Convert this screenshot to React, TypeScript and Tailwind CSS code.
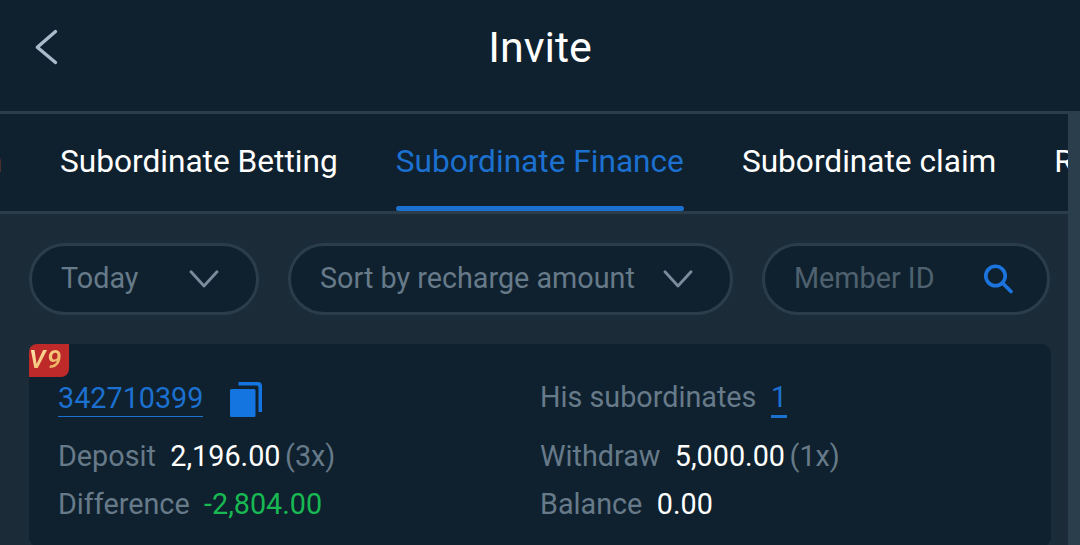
import type { ReactNode } from 'react';

const tabs = [
  { label: 'Commission', active: false, box: 'w-[2px] items-end' },
  { label: 'Subordinate Betting', active: false, box: '' },
  { label: 'Subordinate Finance', active: true, box: '' },
  { label: 'Subordinate claim', active: false, box: '' },
  { label: 'Rebate', active: false, box: '' },
];

function ChevronDown() {
  return (
    <svg className="h-[18px] w-[30px] shrink-0" viewBox="0 0 30 18" fill="none" stroke="#7b8d9c" strokeWidth="2.8" strokeLinecap="round" strokeLinejoin="round">
      <path d="M2 1.8 15 16 28 1.8" />
    </svg>
  );
}

function Pill({ className, children }: { className: string; children: ReactNode }) {
  return (
    <div className={`flex h-[72px] shrink-0 items-center justify-between rounded-full border-[3px] border-[#2b3d4b] bg-[#0f212e] pl-[29px] ${className}`}>
      {children}
    </div>
  );
}

function Stat({ label, value, note, tone = 'text-white' }: { label: string; value: string; note?: string; tone?: string }) {
  return (
    <div className="flex h-12 items-center whitespace-pre">
      <span>{label}</span>
      <span className={`ml-[14.4px] ${tone}`}>{value}</span>
      {note && <span className="ml-[4.6px]">{note}</span>}
    </div>
  );
}

export default function App() {
  return (
    <div className="flex h-[545px] w-[1080px] flex-col overflow-hidden bg-[#1b2c38] font-['Roboto',sans-serif] text-[28.75px] leading-none text-[#677a89]">
      <header className="grid h-[111px] shrink-0 grid-cols-[1fr_auto_1fr] items-start bg-[#0f212e]">
        <button aria-label="Back" className="ml-[34px] mt-[29px] w-6">
          <svg className="h-9 w-6" viewBox="0 0 24 36" fill="none" stroke="#a9bacb" strokeWidth="3.4" strokeLinecap="round" strokeLinejoin="round">
            <path d="M21.5 2.5 3.3 18.2 21.5 33.5" />
          </svg>
        </button>
        <h1 className="mt-[25px] text-[43px] leading-[44px] text-white">Invite</h1>
      </header>
      <div className="flex min-h-0 flex-1">
        <main className="flex w-[1068px] shrink-0 flex-col overflow-hidden">
          <nav className="flex h-[103px] shrink-0 gap-[58px] overflow-hidden border-y-[3px] border-[#2b3d4b] bg-[#0f212e] text-[31.63px]">
            {tabs.map((tab) => (
              <div key={tab.label} className={`flex shrink-0 flex-col justify-between whitespace-nowrap ${tab.box} ${tab.active ? 'text-[#1c70d0]' : 'text-white'}`}>
                <span className="mt-8 leading-8">{tab.label}</span>
                {tab.active && <span className="h-[5px] rounded-full bg-[#1c70d0]" />}
              </div>
            ))}
          </nav>
          <div className="flex shrink-0 gap-[29px] pl-[29px] pt-[29px]">
            <Pill className="w-[230px] pr-[37px]">
              <span className="pb-[2px]">Today</span>
              <ChevronDown />
            </Pill>
            <Pill className="w-[445px] pr-[37px]">
              <span className="whitespace-nowrap pb-[2px]">Sort by recharge amount</span>
              <ChevronDown />
            </Pill>
            <Pill className="w-[288px] pr-[33px]">
              <span className="pb-[2px] text-[#4f616f]">Member ID</span>
              <svg className="h-[30px] w-[30px]" viewBox="0 0 30 30" fill="none" stroke="#1c74df" strokeWidth="3.6" strokeLinecap="round">
                <circle cx="11.5" cy="12" r="9.7" />
                <path d="m19 19.5 8 8" />
              </svg>
            </Pill>
          </div>
          <section className="relative ml-[29px] mt-[29px] grid h-[203px] w-[1022px] shrink-0 grid-cols-[482px_1fr] content-start rounded-[10px] bg-[#0f212e] pl-[29px] pt-[38px]">
            <div className="absolute left-0 top-0 flex h-[33px] w-[40px] rounded-br-[8px] rounded-tl-[8px] bg-[#bd2a29] font-semibold italic">
              <span className="bg-linear-to-br from-[#fff0bd] via-[#f5c477] to-[#d99445] bg-clip-text pr-1 text-[26px] leading-[31px] tracking-[1.5px] text-transparent">V9</span>
            </div>
            <div className="flex h-[50px] items-start">
              <a className="h-[35px] border-b border-[#1c70d0] pt-[2px] leading-[28px] text-[#1c70d0]">342710399</a>
              <svg className="ml-[27px] h-[35px] w-[32px]" viewBox="0 0 32 35" fill="#1475e1">
                <rect y="7" width="25.5" height="28" rx="1.5" />
                <path d="M8.5 0H28a4 4 0 0 1 4 4v26h-3.5V5.5a2 2 0 0 0-2-2h-18z" />
              </svg>
            </div>
            <div className="flex h-[50px] items-start">
              <span className="pt-px leading-[28px]">His subordinates</span>
              <a className="ml-[14.5px] h-9 border-b-[3px] border-[#1c70d0] pt-px leading-[28px] text-[#1c70d0]">1</a>
            </div>
            <Stat label="Deposit" value="2,196.00" note="(3x)" />
            <Stat label="Withdraw" value="5,000.00" note="(1x)" />
            <Stat label="Difference" value="-2,804.00" tone="text-[#18b852]" />
            <Stat label="Balance" value="0.00" />
          </section>
        </main>
        <aside className="flex-1 bg-[#2b3e4b]" />
      </div>
    </div>
  );
}
